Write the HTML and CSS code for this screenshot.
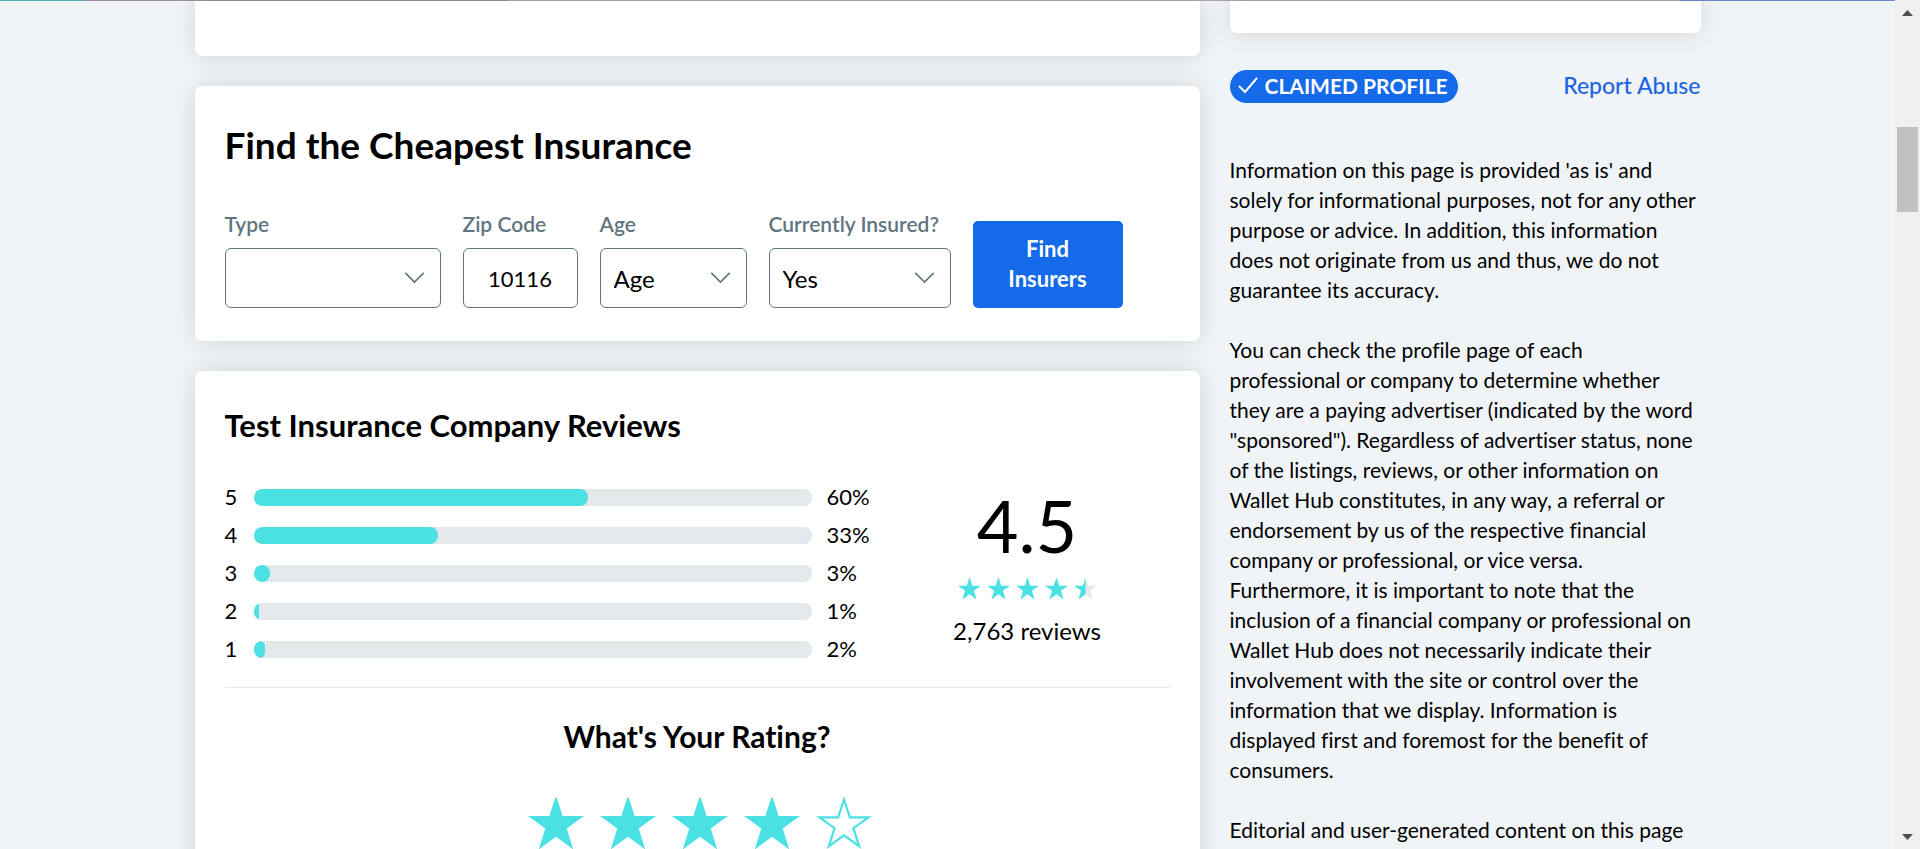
FILE: index.html
```html
<!DOCTYPE html>
<html lang="en">
<head>
<meta charset="utf-8">
<title>Test Insurance Company Reviews</title>
<link rel="stylesheet" href="styles.css">
</head>
<body>
<svg class="symbols" aria-hidden="true">
  <symbol id="star" viewBox="0 0 56 54"><path d="M27.300 1.500h1.400L34.600 20H56L38.800 32.600 45.300 53.500 28 40.800 10.700 53.500 17.200 32.600 0 20h21.400z"/></symbol>
  <symbol id="star-outline" viewBox="0 0 56 54"><path fill="none" stroke="currentColor" stroke-width="2.200" d="M28 3.500l5.800 17.800h18.800L37.400 32.200l5.800 18L28 39.300 12.800 50.200l5.800-18L3.400 21.300h18.800z"/></symbol>
  <symbol id="chevron" viewBox="0 0 22 13"><path fill="none" stroke="currentColor" stroke-width="1.800" d="M1 1l10 10L21 1"/></symbol>
</svg>
<div class="window">
  <div class="page">
    <div class="progress"></div>
    <div class="columns">
      <main class="main">
        <section class="card card-prev"></section>

        <section class="card finder">
          <h2 class="finder-title">Find the Cheapest Insurance</h2>
          <form class="fields">
            <div class="field field-type">
              <label for="type">Type</label>
              <div class="select"><select id="type"><option></option></select><svg class="chevron"><use href="#chevron"/></svg></div>
            </div>
            <div class="field field-zip">
              <label for="zip">Zip Code</label>
              <input id="zip" type="text" value="10116">
            </div>
            <div class="field field-age">
              <label for="age">Age</label>
              <div class="select"><select id="age"><option>Age</option></select><svg class="chevron"><use href="#chevron"/></svg></div>
            </div>
            <div class="field field-insured">
              <label for="insured">Currently Insured?</label>
              <div class="select"><select id="insured"><option>Yes</option></select><svg class="chevron"><use href="#chevron"/></svg></div>
            </div>
            <button class="find" type="button">Find Insurers</button>
          </form>
        </section>

        <section class="card reviews">
          <h2 class="reviews-title">Test Insurance Company Reviews</h2>
          <div class="summary">
            <div class="bars">
              <div class="row"><span>5</span><div class="track"><div class="fill" style="width:60%"></div></div><span>60%</span></div>
              <div class="row"><span>4</span><div class="track"><div class="fill" style="width:33%"></div></div><span>33%</span></div>
              <div class="row"><span>3</span><div class="track"><div class="fill" style="width:3%"></div></div><span>3%</span></div>
              <div class="row"><span>2</span><div class="track"><div class="fill" style="width:1%"></div></div><span>1%</span></div>
              <div class="row"><span>1</span><div class="track"><div class="fill" style="width:2%"></div></div><span>2%</span></div>
            </div>
            <div class="score">
              <div class="score-value">4.5</div>
              <div class="score-stars">
                <svg viewBox="0 0 56 54"><use href="#star"/></svg>
                <svg viewBox="0 0 56 54"><use href="#star"/></svg>
                <svg viewBox="0 0 56 54"><use href="#star"/></svg>
                <svg viewBox="0 0 56 54"><use href="#star"/></svg>
                <svg viewBox="0 0 56 54"><path class="star-rest" d="M28 0l6.600 20H56L38.800 32.600 45.300 53.500 28 40.800z"/><path d="M28 0v40.800L10.700 53.500 17.200 32.600 0 20h21.400z"/></svg>
              </div>
              <div class="score-count">2,763 reviews</div>
            </div>
          </div>
          <div class="rate">
            <h3 class="rate-title">What's Your Rating?</h3>
            <div class="rate-stars">
              <button type="button" aria-label="1 star"><svg><use href="#star"/></svg></button>
              <button type="button" aria-label="2 stars"><svg><use href="#star"/></svg></button>
              <button type="button" aria-label="3 stars"><svg><use href="#star"/></svg></button>
              <button type="button" aria-label="4 stars"><svg><use href="#star"/></svg></button>
              <button type="button" aria-label="5 stars"><svg><use href="#star-outline"/></svg></button>
            </div>
          </div>
        </section>
      </main>

      <aside class="side">
        <div class="card card-side"></div>
        <div class="claim">
          <span class="badge"><svg viewBox="0 0 20 17"><path d="M1 9l6 6L19 1"/></svg>CLAIMED PROFILE</span>
          <a class="report" href="#">Report Abuse</a>
        </div>
        <div class="notes">
          <p>Information on this page is provided 'as is' and solely for informational purposes, not for any other purpose or advice. In addition, this information does not originate from us and thus, we do not guarantee its accuracy.</p>
          <p>You can check the profile page of each<br>professional or company to determine whether<br>they are a paying advertiser (indicated by the word "sponsored"). Regardless of advertiser status, none of the listings, reviews, or other information on Wallet Hub constitutes, in any way, a referral or endorsement by us of the respective financial company or professional, or vice versa. Furthermore, it is important to note that the inclusion of a financial company or professional on Wallet Hub does not necessarily indicate their involvement with the site or control over the information that we display. Information is displayed first and foremost for the benefit of consumers.</p>
          <p>Editorial and user-generated content on this page</p>
        </div>
      </aside>
    </div>
  </div>
  <div class="scrollbar">
    <svg viewBox="0 0 11 6"><path d="M0 6L5.500 0 11 6z"/></svg>
    <div class="thumb"></div>
    <svg viewBox="0 0 11 6"><path d="M0 0l5.500 6L11 0z"/></svg>
  </div>
</div>
</body>
</html>
```
FILE: styles.css
```css
* { box-sizing: border-box; }
body {
  margin: 0;
  background: #f0f4f7;
  color: #000;
  font: 21px/30px Lato, "Open Sans", sans-serif;
  font-variant-ligatures: none;
}
h2, h3, p { margin: 0; }
button, input, select { font-family: inherit; color: inherit; }
.symbols { display: none; }

.window { display: flex; height: 100vh; overflow: hidden; }
.page { flex: 1; min-width: 0; }
.progress {
  height: 1px;
  background: linear-gradient(90deg, #58aab3 0 83px, #998fa6 83px 507px, #aea4b5 507px 1680px, #6c8bcb 1680px);
}
.columns {
  display: grid;
  grid-template-columns: 1005fr 471fr;
  gap: 30px;
  max-width: 1506px;
  margin: 0 auto;
}
.card {
  background: #fff;
  border-radius: 7px;
  box-shadow: 0 0 26px rgba(0, 0, 0, .13);
}
.main { display: flex; flex-direction: column; gap: 30px; }
.card-prev { height: 55px; border-radius: 0 0 7px 7px; }

.finder { padding: 38px 30px 33px; }
.finder-title { font-size: 37px; line-height: 42px; font-weight: 700; }
.fields { display: flex; align-items: flex-end; gap: 22px; margin-top: 43px; }
.field { display: flex; flex-direction: column; gap: 9px; }
.field label { color: #607580; font-weight: 600; line-height: 30px; white-space: nowrap; }
.field-type { width: 216px; }
.field-zip { width: 115px; }
.field-age { width: 147px; }
.field-insured { width: 182px; }
.field input, .field select {
  width: 100%;
  height: 60px;
  border: 1px solid #607580;
  border-radius: 6px;
  background: #fff;
  font-size: 24px;
}
.field input { padding: 0; text-align: center; font-size: 22px; }
.field select { appearance: none; padding: 0 13px; }
.select { display: grid; align-items: center; }
.select > * { grid-area: 1 / 1; }
.chevron {
  width: 21px;
  height: 12px;
  margin-right: 16px;
  justify-self: end;
  color: #607580;
  pointer-events: none;
}
.find {
  width: 150px;
  padding: 13px 24px 14px;
  border: 0;
  border-radius: 5px;
  background: #146ae8;
  color: #fff;
  font-size: 22px;
  line-height: 30px;
  font-weight: 700;
}

.reviews { padding: 36px 30px 40px; }
.reviews-title { font-size: 31px; line-height: 36px; font-weight: 700; }
.summary {
  display: grid;
  grid-template-columns: 1fr 285px;
  padding: 39px 0 23px;
  border-bottom: 1px solid #e3e8ea;
}
.bars { display: grid; gap: 8px; align-content: start; }
.row { display: grid; grid-template-columns: 14px 1fr 58px; column-gap: 15px; align-items: center; font-size: 22px; }
.track { height: 17px; border-radius: 8px; background: #e3e8ea; overflow: hidden; }
.fill { height: 100%; border-radius: 8px; background: #4be1e3; }
.score { display: flex; flex-direction: column; align-items: center; padding-top: 7px; }
.score-value { font-size: 72px; line-height: 72px; }
.score-stars { display: flex; gap: 6px; margin-top: 16px; }
.score-stars svg { width: 23px; height: 23px; fill: #4be1e3; }
.score-stars .star-rest { fill: #e3e8ea; }
.score-count { margin-top: 16px; font-size: 24px; }
.rate { display: flex; flex-direction: column; align-items: center; padding-top: 30px; }
.rate-title { font-size: 30px; line-height: 36px; font-weight: 700; }
.rate-stars { display: flex; gap: 16px; margin-top: 42px; padding-left: 6px; }
.rate-stars button { padding: 0; border: 0; background: none; }
.rate-stars svg { display: block; width: 56px; height: 54px; fill: #4be1e3; color: #4be1e3; }

.card-side { height: 32px; border-radius: 0 0 7px 7px; }
.claim { display: flex; justify-content: space-between; align-items: flex-start; margin-top: 37px; }
.badge {
  display: flex;
  align-items: center;
  gap: 7px;
  height: 33px;
  padding: 0 11px 2px 8px;
  border-radius: 17px;
  background: #146ae8;
  color: #fff;
  font-size: 21px;
  font-weight: 700;
  white-space: nowrap;
}
.badge svg { width: 20px; height: 17px; fill: none; stroke: #fff; stroke-width: 2; }
.report { color: #1c64e4; font-size: 23px; font-weight: 500; text-decoration: none; }
.notes { display: grid; gap: 30px; margin-top: 52px; }

.scrollbar {
  display: flex;
  flex-direction: column;
  align-items: center;
  width: 25px;
  padding: 10px 0 9px;
  background: #f0f0f0;
}
.scrollbar svg { width: 11px; height: 6px; fill: #505050; }
.thumb { width: 21px; height: 85px; margin: 111px 0 auto; background: #c1c1c1; }
```
